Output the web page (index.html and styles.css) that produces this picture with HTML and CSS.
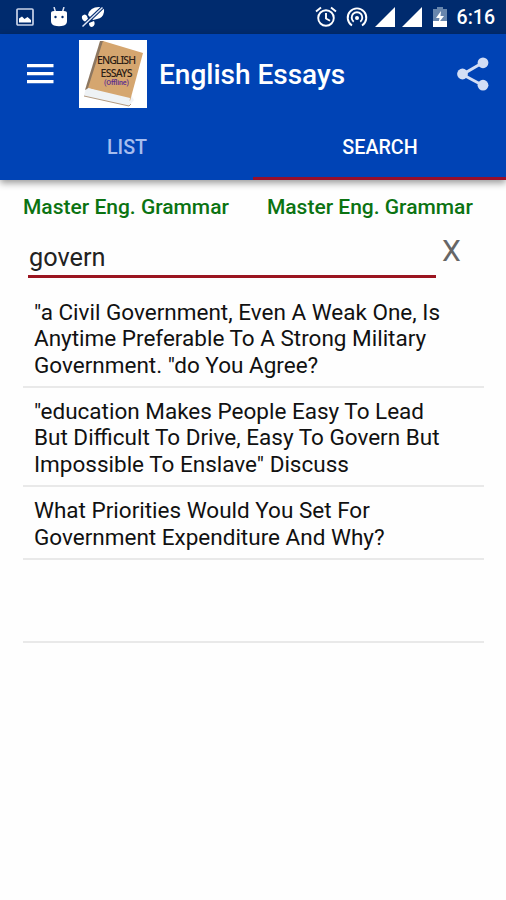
FILE: index.html
```
<!DOCTYPE html>
<html lang="en">
<head>
    <meta charset="UTF-8">
    <meta name="viewport" content="width=device-width, initial-scale=1.0">
    <title>English Essays</title>
    <link rel="stylesheet" href="styles.css">
</head>
<body>
    <div class="status-bar">
        <div class="status-left">
            <svg width="18" height="18" viewBox="0 0 18 18">
                <rect x="1" y="1" width="16" height="16" rx="1" fill="none" stroke="#c9d3e8" stroke-width="1.7"/>
                <path d="M3 14.500V10.500l3-2 2.500 2.500 3-2 3.500 3v2.500z" fill="#fff"/>
            </svg>
            <svg width="18" height="20" viewBox="0 0 18 20">
                <path d="M4 0l1.500 5M14 0l-1.500 5" stroke="#dce4f5" stroke-width="1.500"/>
                <path d="M1 6q0-2 3-2h10q3 0 3 2v8q0 3-3 4.500-5 1.500-10 0Q1 17 1 14z" fill="#fff"/>
                <circle cx="5.500" cy="10" r="1.200" fill="#002b6e"/>
                <circle cx="12.500" cy="10" r="1.200" fill="#002b6e"/>
            </svg>
            <svg width="24" height="22" viewBox="0 0 24 22">
                <path d="M7 9Q9 1 18 1q6 0 5 5-1 6-7 7l-4 1zM1 10q3-3 5 0l1 3-2 3q-5-2-4-6zM8 17l5-2q2 4-2 6-3 0-3-4z" fill="#fff"/>
                <path d="M1 21L22 1" stroke="#002b6e" stroke-width="3.600"/>
                <path d="M1.500 20.500L21.500 1.500" stroke="#dce4f5" stroke-width="1.500"/>
            </svg>
        </div>
        <div class="status-right">
            <svg width="22" height="22" viewBox="0 0 22 22" fill="none" stroke="#fff" stroke-width="1.900">
                <circle cx="11" cy="12" r="7.800"/>
                <path d="M1 5.500L6 1.500M21 5.500L16 1.500M11 7v5.500l4 2.300"/>
            </svg>
            <svg width="22" height="22" viewBox="0 0 22 22" fill="none" stroke="#fff" stroke-width="1.900">
                <path d="M6 19.500A9.300 9.300 0 1 1 16 19.500M7.700 15.700A5.300 5.300 0 1 1 14.300 15.700"/>
                <circle cx="11" cy="12" r="2" fill="#fff" stroke="none"/>
            </svg>
            <svg width="20" height="20" viewBox="0 0 20 20"><path d="M0 20L20 0v20z" fill="#fff"/></svg>
            <svg width="20" height="20" viewBox="0 0 20 20"><path d="M0 20L20 0v20z" fill="#fff"/></svg>
            <svg class="battery" width="14" height="20" viewBox="0 0 14 20">
                <path d="M0 2h4V0h6v2h4v18H0z" fill="#6886ad"/>
                <path d="M0 14h14v6H0z" fill="#fff"/>
                <path d="M8 4L3 11h3.500L5.500 16 11 9H7.500z" fill="#fff"/>
            </svg>
            <span class="clock">6:16</span>
        </div>
    </div>

    <header class="app-bar">
        <div class="toolbar">
            <svg class="menu" width="28" height="20" viewBox="0 0 28 20" fill="#fff">
                <path d="M0 0h26.500v3.200H0zM0 8h26.500v3.200H0zM0 16h26.500v3.200H0z"/>
            </svg>
            <svg class="logo" width="68" height="68" viewBox="0 0 68 68">
                <rect width="68" height="68" fill="#fff"/>
                <path d="M21 2L6 51l-1 5 45 10 5-6z" fill="#f0f2f4"/>
                <path d="M21 1L6 50l4-2L25 1z" fill="#8d7760"/>
                <path d="M24 1l40 12-13 48L9 48z" fill="#d5a66f"/>
                <path d="M9 48l42 10-1 8L5 56z" fill="#eef2f5"/>
                <path d="M5 56l45 10 2-2" fill="none" stroke="#b39a80" stroke-width="1"/>
                <g text-anchor="middle">
                    <text class="logo-text" x="37.500" y="24" textLength="39">ENGLISH</text>
                    <text class="logo-text" x="37.500" y="36.500" textLength="32">ESSAYS</text>
                    <text class="logo-sub" x="37.500" y="44.500" textLength="25">(Offline)</text>
                </g>
            </svg>
            <h1 class="title">English Essays</h1>
            <svg class="share" width="34" height="34" viewBox="0 0 34 34">
                <path d="M27 5.500L6.500 17.500 27 28.500" fill="none" stroke="#d3def5" stroke-width="3"/>
                <g fill="#d3def5">
                    <circle cx="27" cy="5.800" r="5.400"/>
                    <circle cx="6.500" cy="17" r="5.400"/>
                    <circle cx="27" cy="28.200" r="5.400"/>
                </g>
            </svg>
        </div>
        <nav class="tabs">
            <div class="tab">LIST</div>
            <div class="tab active">SEARCH</div>
        </nav>
    </header>

    <main class="content">
        <div class="links">
            <a class="link">Master Eng. Grammar</a>
            <a class="link">Master Eng. Grammar</a>
        </div>
        <div class="search">
            <input class="search-input" type="text" value="govern">
            <span class="clear">X</span>
        </div>
        <ul class="results">
            <li>"a Civil Government, Even A Weak One, Is<br>Anytime Preferable To A Strong Military<br>Government. "do You Agree?</li>
            <li>"education Makes People Easy To Lead<br>But Difficult To Drive, Easy To Govern But<br>Impossible To Enslave" Discuss</li>
            <li>What Priorities Would You Set For<br>Government Expenditure And Why?</li>
            <li class="empty"></li>
        </ul>
    </main>
</body>
</html>
```
FILE: styles.css
```
* {
    margin: 0;
    padding: 0;
    box-sizing: border-box;
    font-family: Roboto, sans-serif;
}

body {
    background-color: #fefefe;
    color: #111;
    height: 900px;
    overflow: hidden;
}

svg {
    display: block;
    flex-shrink: 0;
}

/* Status bar */
.status-bar {
    display: flex;
    justify-content: space-between;
    height: 34px;
    padding: 0 11px 0 16px;
    background-color: #002b6e;
}

.status-left,
.status-right {
    display: flex;
    align-items: center;
}

.status-left {
    gap: 16px;
}

.status-left svg:last-child {
    margin-left: -3px;
}

.status-right {
    gap: 7px;
}

.status-right svg:first-child {
    margin-right: 2px;
}

.status-right .battery {
    margin-left: 4px;
}

.clock {
    margin-left: 3px;
    color: #fff;
    font-size: 19.500px;
    font-weight: 500;
    line-height: 24px;
    padding-top: 2px;
}

/* App bar */
.app-bar {
    height: 146px;
    background-color: #0043b5;
    box-shadow: 0 3px 7px rgba(0, 0, 0, 0.4);
}

.toolbar {
    display: flex;
    align-items: center;
    height: 79px;
    padding: 0 16px 0 27px;
}

.logo {
    margin-left: 24px;
}

.logo-text {
    font-family: "Noto Sans", sans-serif;
    font-size: 10.500px;
    font-weight: 500;
    fill: #2d2015;
}

.logo-sub {
    font-size: 7px;
    font-weight: 500;
    fill: #5a2a90;
}

.title {
    margin-left: 12px;
    padding-top: 2px;
    color: #fff;
    font-size: 28px;
    font-weight: 500;
}

.share {
    margin-left: auto;
}

.tabs {
    display: flex;
    height: 67px;
}

.tab {
    flex: 1;
    padding: 23px 0 0 1px;
    border-bottom: 3px solid transparent;
    color: #a6bdee;
    font-size: 19.700px;
    font-weight: 500;
    line-height: 24px;
    text-align: center;
}

.tab.active {
    color: #fff;
    border-color: #960f2b;
}

/* Search page */
.content {
    padding: 14px 22px 0 23px;
}

.links {
    display: flex;
    gap: 38px;
}

.link {
    color: #0b7312;
    font-size: 21px;
    font-weight: 500;
    line-height: 26px;
    white-space: nowrap;
}

.search {
    display: flex;
    height: 58px;
    padding-left: 5px;
}

.search-input {
    width: 408px;
    height: 58px;
    padding: 20px 0 0 1px;
    border: none;
    border-bottom: 3px solid #9b1520;
    outline: none;
    background: none;
    color: #222;
    font-size: 25.300px;
}

.clear {
    margin: 13px 0 0 6px;
    color: #666;
    font-size: 30px;
    line-height: 36px;
}

.results {
    list-style: none;
    padding-top: 10.500px;
}

.results li {
    padding: 10px 0 7.500px 11px;
    border-bottom: 2px solid #e9e9e9;
    font-size: 22.500px;
    line-height: 26.600px;
    white-space: nowrap;
}

.results .empty {
    height: 83px;
}
```
